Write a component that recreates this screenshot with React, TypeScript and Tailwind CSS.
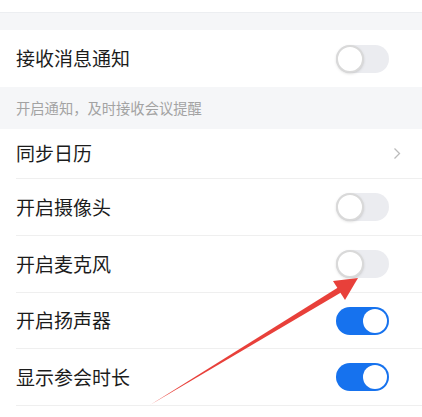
import React from 'react';

const Toggle: React.FC<{ on?: boolean }> = ({ on }) => {
  if (on) {
    return (
      <div className="w-[53px] h-[28px] rounded-full bg-[#1672ee] flex items-center justify-end pr-[2px]">
        <div className="w-[24px] h-[24px] rounded-full bg-white" />
      </div>
    );
  }
  return (
    <div className="w-[53px] h-[28px] rounded-full bg-[#ebecf0] flex items-center">
      <div className="w-[28px] h-[28px] rounded-full bg-white border-2 border-[#d9d9d9] shadow-sm" />
    </div>
  );
};

const Row: React.FC<{ label: string; h: string; children?: React.ReactNode; divider?: boolean }> = ({
  label,
  h,
  children,
  divider = true,
}) => (
  <div className="bg-white pl-4">
    <div className={`flex items-center justify-between pr-[33px] ${h} ${divider ? 'border-b border-[#efefef]' : ''}`}>
      <span className="text-[19px] text-[#1c1c1c]">{label}</span>
      {children}
    </div>
  </div>
);

const Chevron = () => (
  <svg width="8" height="13" viewBox="0 0 8 13" className="mr-[-12px]">
    <path d="M1.5 1.5 L6.5 6.5 L1.5 11.5" fill="none" stroke="#bbbbbb" strokeWidth="1.3" />
  </svg>
);

export default function App() {
  return (
    <div
      className="relative w-[422px] h-[417px] overflow-hidden bg-[#f5f6f8]"
      style={{ fontFamily: '"Noto Sans CJK SC", "Noto Sans", sans-serif' }}
    >
      {/* top strip */}
      <div className="h-[13px] bg-white border-b border-[#eceef1]" />
      <div className="h-[17px]" />

      <Row label="接收消息通知" h="h-[57px]" divider={false}>
        <Toggle />
      </Row>

      {/* hint */}
      <div className="h-[42px] flex items-center px-4 text-[14.3px] text-[#a3a3a3]">
        开启通知，及时接收会议提醒
      </div>

      <Row label="同步日历" h="h-[50px]">
        <Chevron />
      </Row>
      <Row label="开启摄像头" h="h-[57px]">
        <Toggle />
      </Row>
      <Row label="开启麦克风" h="h-[57px]">
        <Toggle />
      </Row>
      <Row label="开启扬声器" h="h-[56px]">
        <Toggle on />
      </Row>
      <Row label="显示参会时长" h="h-[57px]">
        <Toggle on />
      </Row>
      <div className="h-[20px] bg-white" />

      {/* annotation arrow */}
      <svg
        className="absolute inset-0 pointer-events-none"
        width="422"
        height="417"
        viewBox="0 0 422 417"
      >
        <polygon points="150,405 338,287.5 341,292.5" fill="#e8403a" />
        <polygon points="358,278 333,281 345,300" fill="#e8403a" />
      </svg>
    </div>
  );
}
